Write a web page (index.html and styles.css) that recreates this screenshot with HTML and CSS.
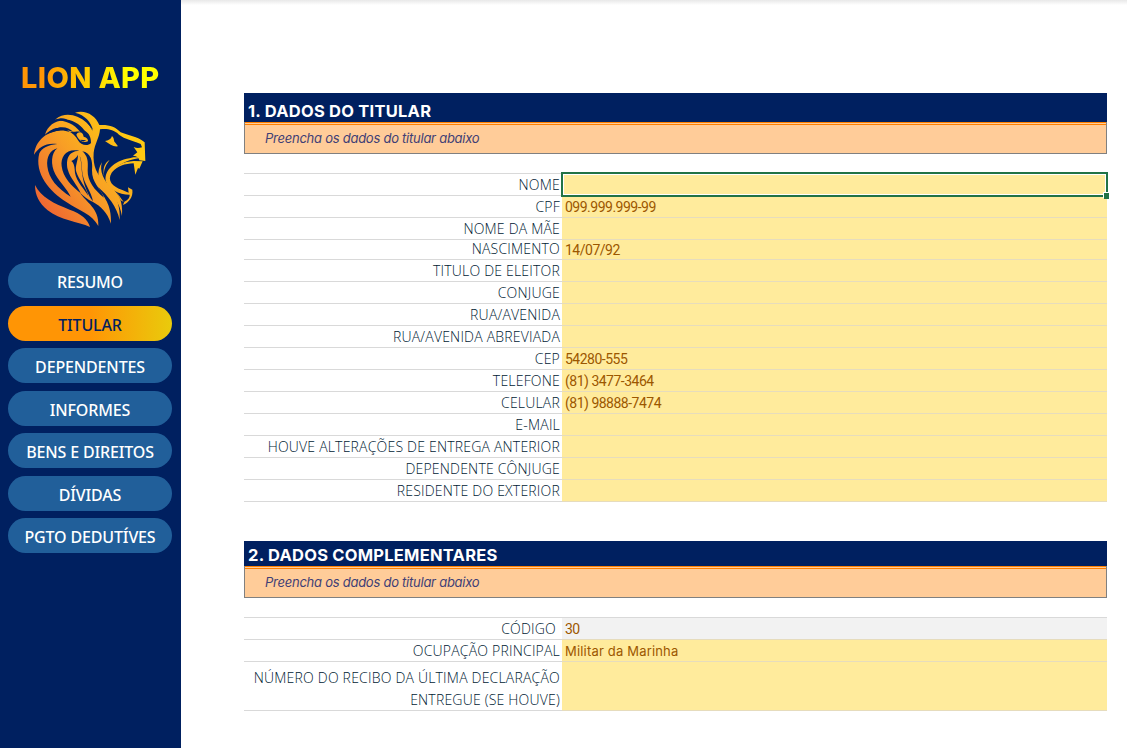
FILE: index.html
```html
<!DOCTYPE html>
<html lang="pt-BR">
<head>
<meta charset="utf-8">
<title>Lion App</title>
<link rel="stylesheet" href="styles.css">
</head>
<body>
<div class="app">
  <aside class="sidebar">
    <h1 class="brand">LION APP</h1>
    <svg class="lion" viewBox="0 0 420 405">
      <defs>
        <linearGradient id="gold" gradientUnits="userSpaceOnUse" x1="60" y1="320" x2="330" y2="120">
          <stop offset="0" stop-color="#ee6533"/>
          <stop offset=".5" stop-color="#f89f25"/>
          <stop offset="1" stop-color="#ffc912"/>
        </linearGradient>
      </defs>
      <g fill="url(#gold)">
        <path d="M165 38C195 28 226 45 238 75C266 73 287 80 302 97C324 106 352 109 374 127L376 183L358 181C357 173 351 168 339 167L352 157L341 141C350 145 358 144 366 142L362 132C338 121 315 118 297 104C280 88 262 86 240 88C239 111 224 132 221 158C218 199 231 222 254 248C278 272 302 300 299 360C290 320 265 288 234 261C251 292 275 310 273 371C262 337 242 319 219 306C203 298 188 287 180 278C197 306 238 324 235 378C216 342 180 334 139 306C90 277 42 220 58 160C65 145 85 134 112 132C79 127 57 140 42 164C46 126 74 96 118 92C129 91 140 93 150 97C126 73 96 83 75 104C84 73 114 55 148 64C137 52 121 53 105 59C129 39 153 43 172 50C193 59 209 73 219 91C213 66 195 45 165 38Z"/>
        <path d="M45 255C62 291 102 311 149 329C183 341 204 358 210 381C175 365 119 361 83 331C57 309 45 285 45 255Z"/>
        <path d="M255 123C265 122 273 118 276 108C284 115 280 124 286 128L294 139C279 141 269 133 255 123Z"/>
        <path d="M376 172C331 176 293 191 275 218C260 242 278 260 307 270L326 278L324 262L337 269C340 292 326 307 309 315L313 305C325 299 330 291 329 284C297 284 262 266 257 242C253 214 280 183 329 175L340 172Z"/>
        <path d="M276 217C292 198 315 191 341 190L346 224L354 204L358 206L368 184L341 183C310 185 286 197 276 217Z"/>
        <path d="M246 187C237 211 251 245 277 266C296 281 309 302 306 348C299 307 280 288 262 273C232 249 228 214 246 187Z"/>
        <path d="M269 179C253 201 249 216 254 235C246 206 253 190 269 179ZM291 278L311 306L302 301Z"/>
      </g>
      <g class="lion-cut">
        <path d="M168 43C194 48 211 69 218 94C207 71 193 57 168 43Z"/>
        <path d="M105 61C143 51 177 68 193 91C203 98 213 106 213 129C202 141 181 134 174 121C167 108 161 103 150 96C167 97 170 93 181 96C162 73 139 61 105 61Z"/>
        <path d="M76 106C109 75 140 76 160 96C135 87 111 87 76 106Z"/>
        <path d="M112 145C93 159 91 194 106 223C121 250 142 268 152 290C112 265 86 236 82 199C79 171 90 151 112 145Z"/>
        <path d="M178 152C142 154 138 181 143 208C150 236 171 253 182 280C153 257 129 232 125 199C121 169 140 144 178 152Z"/>
        <path d="M154 183C167 176 171 170 174 164C174 184 164 198 169 216C177 240 198 262 205 287C184 257 164 237 164 208C163 197 161 188 154 183Z"/>
        <path d="M187 154C212 158 219 183 216 211C215 248 241 265 252 293C223 270 202 243 203 211C205 183 203 168 187 154Z"/>
        <path d="M179 168C187 183 184 210 190 232C195 254 214 276 219 304C206 288 195 264 189 236C183 208 186 190 179 168Z"/>
      </g>
      <path fill="url(#gold)" d="M169 104C175 94 188 94 191 110C201 113 205 118 204 124C191 130 177 123 169 104Z"/>
      <path class="lion-cut" d="M181 119L199 121C192 126 185 125 181 119Z"/>
    </svg>
    <nav class="menu">
      <a class="item">RESUMO</a>
      <a class="item active">TITULAR</a>
      <a class="item">DEPENDENTES</a>
      <a class="item">INFORMES</a>
      <a class="item">BENS E DIREITOS</a>
      <a class="item">DÍVIDAS</a>
      <a class="item">PGTO DEDUTÍVES</a>
    </nav>
  </aside>
  <main class="sheet">
    <section class="block">
      <h2 class="title">1. DADOS DO TITULAR</h2>
      <p class="hint">Preencha os dados do titular abaixo</p>
      <div class="grid">
        <div class="row"><span class="label">NOME</span><span class="value selected"><i class="handle"></i></span></div>
        <div class="row"><span class="label">CPF</span><span class="value">099.999.999-99</span></div>
        <div class="row"><span class="label">NOME DA MÃE</span><span class="value"></span></div>
        <div class="row short"><span class="label">NASCIMENTO</span><span class="value">14/07/92</span></div>
        <div class="row"><span class="label">TITULO DE ELEITOR</span><span class="value"></span></div>
        <div class="row"><span class="label">CONJUGE</span><span class="value"></span></div>
        <div class="row"><span class="label">RUA/AVENIDA</span><span class="value"></span></div>
        <div class="row"><span class="label">RUA/AVENIDA ABREVIADA</span><span class="value"></span></div>
        <div class="row"><span class="label">CEP</span><span class="value">54280-555</span></div>
        <div class="row"><span class="label">TELEFONE</span><span class="value">(81) 3477-3464</span></div>
        <div class="row"><span class="label">CELULAR</span><span class="value">(81) 98888-7474</span></div>
        <div class="row"><span class="label">E-MAIL</span><span class="value"></span></div>
        <div class="row"><span class="label">HOUVE ALTERAÇÕES DE ENTREGA ANTERIOR</span><span class="value"></span></div>
        <div class="row"><span class="label">DEPENDENTE CÔNJUGE</span><span class="value"></span></div>
        <div class="row"><span class="label">RESIDENTE DO EXTERIOR</span><span class="value"></span></div>
      </div>
    </section>
    <section class="block second">
      <h2 class="title">2. DADOS COMPLEMENTARES</h2>
      <p class="hint">Preencha os dados do titular abaixo</p>
      <div class="grid">
        <div class="row"><span class="label inset">CÓDIGO</span><span class="value locked">30</span></div>
        <div class="row"><span class="label">OCUPAÇÃO PRINCIPAL</span><span class="value prose">Militar da Marinha</span></div>
        <div class="row tall"><span class="label">NÚMERO DO RECIBO DA ÚLTIMA DECLARAÇÃO<br>ENTREGUE (SE HOUVE)</span><span class="value"></span></div>
      </div>
    </section>
  </main>
</div>
</body>
</html>
```
FILE: styles.css
```css
* { box-sizing: border-box; }
body { margin: 0; background: #fff; overflow: hidden; }
.app { display: flex; width: 1127px; height: 748px; }

.sidebar {
  width: 181px;
  flex: none;
  background: #002060;
  display: flex;
  flex-direction: column;
  padding: 61px 9px 0 8px;
}
.brand {
  margin: 0 0 0 13px;
  width: 142px;
  height: 34px;
  font: 800 29px/34px "Inter", sans-serif;
  letter-spacing: 0.35px;
  white-space: nowrap;
  background: linear-gradient(90deg, #ff9505 0%, #ff9505 15%, #ffff00 75%);
  -webkit-background-clip: text;
  background-clip: text;
  color: transparent;
}
.lion { width: 140px; height: 135px; margin: 5px 0 0 12px; flex: none; }
.lion-cut { fill: #002060; }
.menu { display: flex; flex-direction: column; gap: 7.55px; margin-top: 28px; }
.item {
  height: 35px;
  border-radius: 18px;
  background: #215f9a;
  color: #fff;
  font: 500 16px/38px "Noto Sans", sans-serif;
  letter-spacing: -0.15px;
  text-align: center;
  white-space: nowrap;
}
.active { background: linear-gradient(90deg, #ff9505 50%, #e9cb0c 100%); color: #002060; }

.sheet {
  flex: 1;
  padding: 93px 20px 0 63px;
  background: linear-gradient(#e8e8e8, #fff 5px);
}
.title {
  margin: 0;
  height: 29px;
  padding-left: 4px;
  background: #002060;
  color: #fff;
  font: 700 16.5px/36px "Inter", sans-serif;
  letter-spacing: 0.24px;
}
.hint {
  margin: 0;
  height: 32px;
  padding-left: 20px;
  border: solid #808080;
  border-width: 0 1px 1px;
  background: linear-gradient(#ff8000 1px, #ffcc99 1px, #ffcc99 2px, #ff8000 2px, #ff8000 3px, #ffcc99 3px);
  color: #3f3f76;
  font: italic 400 13px/33px "Inter", sans-serif;
  letter-spacing: -0.25px;
}
.grid { margin-top: 19px; border-top: 1px solid #d9d9d9; }
.row { display: flex; height: 22px; }
.short { height: 20px; }
.tall { height: 49px; }
.label {
  width: 318px;
  padding-right: 2px;
  border-bottom: 1px solid #d9d9d9;
  text-align: right;
  white-space: nowrap;
  color: #001a33;
  font: 300 14px/22px "Open Sans", sans-serif;
  letter-spacing: 0.2px;
}
.short .label { line-height: 18px; }
.tall .label { padding-top: 5px; }
.inset { padding-right: 6px; }
.value {
  flex: 1;
  position: relative;
  padding-left: 3px;
  border-bottom: 1px solid #e6dcbd;
  background: #ffeb9c;
  color: #9c5700;
  font: 400 14px/23px "Roboto", sans-serif;
  letter-spacing: -0.5px;
}
.prose { font: 400 13px/23px "Inter", sans-serif; letter-spacing: 0.18px; }
.short .value { line-height: 21px; }
.locked { background: #f2f2f2; }
.selected::before {
  content: "";
  position: absolute;
  inset: -2px -1px -2px -1px;
  z-index: 1;
  border: 2px solid #217346;
  box-shadow: inset 0 0 0 1px #fff;
}
.handle {
  position: absolute;
  z-index: 2;
  right: -2px;
  bottom: -4px;
  width: 5px;
  height: 6px;
  background: #217346;
  box-shadow: -1px -1px 0 #fff;
}
.second { margin-top: 39px; }
.second .title { height: 25px; line-height: 28px; }
```
